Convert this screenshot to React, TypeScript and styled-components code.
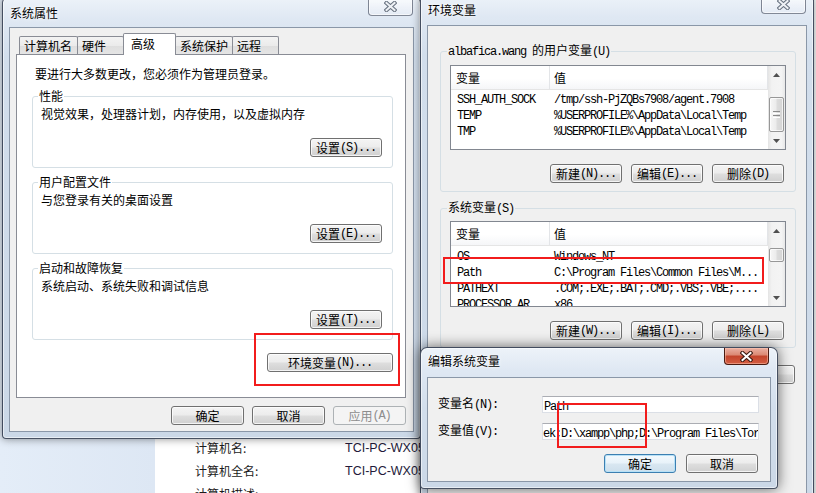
import React from "react";
import styled, { createGlobalStyle, css } from "styled-components";

const CJK = `"Noto Sans CJK SC", "Noto Sans", sans-serif`;
const MONO = `"Liberation Mono", "Noto Sans CJK SC", monospace`;

const GlobalStyle = createGlobalStyle`
  html, body { margin: 0; padding: 0; background: #fff; }
  body { font-family: ${CJK}; font-size: 12px; line-height: 16px; color: #000; }
  * { box-sizing: border-box; }
`;

const Lat = styled.span`
  font-family: ${MONO};
  font-size: 12px;
  letter-spacing: -1.2px;
`;

/* ---------- desktop / explorer behind ---------- */
const Desktop = styled.div`
  position: relative;
  width: 816px;
  height: 493px;
  overflow: hidden;
`;
const Explorer = styled.div`
  display: grid;
  grid-template-columns: 155px 1fr;
  height: 100%;
`;
const NavPane = styled.div`
  background: linear-gradient(90deg, #e4edf8, #dde7f4);
`;
const InfoPane = styled.div`
  background: #fff;
  padding: 436px 0 0 40px;
  display: grid;
  grid-template-columns: 150px auto;
  grid-auto-rows: 23px;
  align-items: center;
  color: #1b1b1b;
  white-space: nowrap;
`;
const InfoValue = styled.span`
  font-family: "Liberation Sans", "Noto Sans", sans-serif;
  font-size: 12.5px;
  color: #231a3a;
`;

/* ---------- window chrome ---------- */
const Win = styled.section<{ $x: number; $y: number; $w: number; $h: number; $active?: boolean }>`
  position: absolute;
  left: ${(p) => p.$x}px;
  top: ${(p) => p.$y}px;
  width: ${(p) => p.$w}px;
  height: ${(p) => p.$h}px;
  display: flex;
  flex-direction: column;
  padding: 0 6px 6px;
  border: 1px solid rgba(30, 40, 60, 0.8);
  border-radius: 7px 7px 4px 4px;
  background: linear-gradient(180deg, #edf3f9 0px, #dfe8f3 22px, #d2deec 60px, #cbd8e7 100%);
  box-shadow: inset 0 0 0 1px rgba(255, 255, 255, 0.55),
    0 0 ${(p) => (p.$active ? 14 : 9)}px rgba(0, 0, 0, ${(p) => (p.$active ? 0.6 : 0.45)});
`;
const TitleBar = styled.header<{ $h: number }>`
  flex: none;
  height: ${(p) => p.$h}px;
  display: flex;
  align-items: flex-start;
`;
const Title = styled.h1<{ $ty: number }>`
  flex: 1;
  margin: 0;
  padding: ${(p) => p.$ty}px 0 0 1px;
  font: normal 12px/16px ${CJK};
  color: #000;
  text-shadow: 0 0 5px #fff, 0 0 2px #fff;
`;
const CloseBtn = styled.div<{ $h: number; $active?: boolean }>`
  width: 45px;
  height: ${(p) => p.$h}px;
  margin-right: 1px;
  display: flex;
  align-items: center;
  justify-content: center;
  border: 1px solid rgba(50, 60, 80, 0.6);
  border-top: none;
  border-radius: 0 0 4px 4px;
  background: linear-gradient(180deg, rgba(255, 255, 255, 0.8), rgba(228, 235, 244, 0.85));
  box-shadow: inset 0 0 0 1px rgba(255, 255, 255, 0.6);
  ${(p) =>
    p.$active &&
    css`
      margin-right: 2px;
      border-color: #4a1a10;
      background: linear-gradient(180deg, #eab0a2 0%, #dc8a75 42%, #c3452c 52%, #d45d42 100%);
      box-shadow: inset 0 0 0 1px rgba(255, 200, 180, 0.5);
    `}
`;
const CloseGlyph = ({ active }: { active?: boolean }) => (
  <svg width="13" height="11" viewBox="0 0 13 11">
    <path
      d="M2.5 2 L10.5 9 M10.5 2 L2.5 9"
      stroke={active ? "#3b1a12" : "#6a7482"}
      strokeWidth="4.2"
      strokeLinecap="square"
    />
    <path
      d="M2.5 2 L10.5 9 M10.5 2 L2.5 9"
      stroke={active ? "#ffffff" : "#eef1f5"}
      strokeWidth="2"
      strokeLinecap="square"
    />
  </svg>
);
const Client = styled.div<{ $pad: string }>`
  flex: 1;
  min-height: 0;
  display: flex;
  flex-direction: column;
  padding: ${(p) => p.$pad};
  background: #f0f0f0;
  border: 1px solid #8a97a8;
`;

/* ---------- controls ---------- */
const Btn = styled.button<{ $w?: number; $default?: boolean }>`
  width: ${(p) => p.$w ?? 72}px;
  height: 19px;
  padding: 0;
  margin: 0;
  border: 1px solid #707070;
  border-radius: 3px;
  background: linear-gradient(180deg, #f4f4f4 0%, #ececec 48%, #dedede 52%, #d0d0d0 100%);
  box-shadow: inset 0 0 0 1px rgba(255, 255, 255, 0.75);
  font-family: ${CJK};
  font-size: 12px;
  line-height: 16px;
  color: #000;
  display: inline-flex;
  align-items: center;
  justify-content: center;
  white-space: nowrap;
  ${(p) =>
    p.$default &&
    css`
      border-color: #3c7fb1;
      box-shadow: inset 0 0 0 1px #b7e1f7;
      background: linear-gradient(180deg, #f3f9fd 0%, #e8f2f9 48%, #d9e7f1 52%, #cddfec 100%);
    `}
  &:disabled {
    border-color: #adb2b5;
    background: #f4f4f4;
    color: #8d8d8d;
    box-shadow: none;
  }
`;
const BtnRow = styled.div<{ $mt: number; $pr?: number; $gap?: number }>`
  display: flex;
  justify-content: flex-end;
  gap: ${(p) => p.$gap ?? 8}px;
  margin-top: ${(p) => p.$mt}px;
  padding-right: ${(p) => p.$pr ?? 0}px;
`;
const Group = styled.fieldset<{ $mt: number; $pt: number; $pb: number }>`
  margin: ${(p) => p.$mt}px 0 0;
  padding: ${(p) => p.$pt}px 10px ${(p) => p.$pb}px 8px;
  border: 1px solid #d5dfe5;
  border-radius: 3px;
  min-width: 0;
`;
const VarGroup = styled(Group)`
  padding-left: 9px;
  padding-right: 9px;
`;
const Legend = styled.legend`
  margin-left: -3px;
  padding: 0 1px;
  line-height: 16px;
  font-size: 12px;
`;

/* ---------- tabs ---------- */
const TabStrip = styled.div`
  position: relative;
  z-index: 1;
  height: 22px;
  margin-bottom: -1px;
  padding-left: 3px;
  display: flex;
  align-items: flex-end;
  flex: none;
`;
const Tab = styled.div<{ $w: number; $sel?: boolean }>`
  position: relative;
  width: ${(p) => p.$w}px;
  height: 18px;
  margin: 0 0 1px -1px;
  padding: 1px 0 0 ${(p) => (p.$sel ? 7 : 4)}px;
  border: 1px solid #898c95;
  border-bottom: none;
  border-radius: 2px 2px 0 0;
  background: linear-gradient(180deg, #f3f3f3 0%, #ebebeb 50%, #dedede 51%, #e5e5e5 100%);
  line-height: 16px;
  white-space: nowrap;
  &:first-child {
    margin-left: 0;
  }
  ${(p) =>
    p.$sel &&
    css`
      z-index: 2;
      height: 22px;
      margin-bottom: 0;
      padding-top: 2px;
      background: #fff;
    `}
`;
const TabPage = styled.div`
  flex: 1;
  min-height: 0;
  display: flex;
  flex-direction: column;
  padding: 11px 12px 0 15px;
  background: #fff;
  border: 1px solid #898c95;
`;
const Notice = styled.div`
  padding-left: 3px;
`;
const GroupText = styled.div``;

/* ---------- list view ---------- */
const List = styled.div<{ $h: number }>`
  height: ${(p) => p.$h}px;
  display: grid;
  grid-template-columns: 1fr 17px;
  overflow: hidden;
  background: #fff;
  border: 1px solid #828790;
`;
const ListBody = styled.div`
  min-width: 0;
  overflow: hidden;
  display: flex;
  flex-direction: column;
`;
const Header = styled.div`
  flex: none;
  height: 24px;
  display: grid;
  grid-template-columns: 99px 1fr;
  border-bottom: 1px solid #e5e5e5;
  background: linear-gradient(180deg, #ffffff 0%, #ffffff 55%, #f5f6f8 100%);
`;
const HeadCell = styled.div<{ $pl: number }>`
  display: flex;
  align-items: center;
  padding-left: ${(p) => p.$pl}px;
  border-right: 1px solid #e3e5e8;
  font-size: 12px;
`;
const Rows = styled.div<{ $pt: number }>`
  padding-top: ${(p) => p.$pt}px;
`;
const Row = styled.div`
  height: 16px;
  display: grid;
  grid-template-columns: 99px 1fr;
  align-items: center;
`;
const Cell = styled(Lat)<{ $pl: number }>`
  padding-left: ${(p) => p.$pl}px;
  white-space: nowrap;
  overflow: hidden;
`;
const ScrollBar = styled.div`
  display: flex;
  flex-direction: column;
  background: linear-gradient(90deg, #e4e4e4 0%, #f2f2f2 22%, #f4f4f4 78%, #e8e8e8 100%);
`;
const Arrow = styled.div`
  flex: none;
  height: 17px;
  display: flex;
  align-items: center;
  justify-content: center;
`;
const Track = styled.div<{ $off: number }>`
  flex: 1;
  padding: ${(p) => p.$off}px 0 0;
`;
const Thumb = styled.div<{ $h: number }>`
  height: ${(p) => p.$h}px;
  margin: 0 1px;
  display: flex;
  align-items: center;
  justify-content: center;
  border: 1px solid #979797;
  border-radius: 2px;
  background: linear-gradient(90deg, #f6f6f6 0%, #ececec 45%, #dcdcdc 55%, #d4d4d4 100%);
  box-shadow: inset 0 0 0 1px rgba(255, 255, 255, 0.7);
`;

const ArrowGlyph = ({ up }: { up?: boolean }) => (
  <svg width="7" height="4" viewBox="0 0 7 4">
    <polygon points={up ? "3.5,0 7,4 0,4" : "0,0 7,0 3.5,4"} fill="#505050" />
  </svg>
);
const Grip = () => (
  <svg width="7" height="7" viewBox="0 0 7 7">
    {[0, 2, 4, 6].map((y) => (
      <rect key={y} x="0" y={y} width="7" height="1" fill={y % 4 === 0 ? "#8a8a8a" : "#ffffff"} />
    ))}
  </svg>
);

type VarRow = [string, string];

const ListView = ({
  h,
  rows,
  rowsTop,
  thumbOff,
  thumbH,
  grip,
}: {
  h: number;
  rows: VarRow[];
  rowsTop: number;
  thumbOff: number;
  thumbH: number;
  grip?: boolean;
}) => (
  <List $h={h}>
    <ListBody>
      <Header>
        <HeadCell $pl={5}>变量</HeadCell>
        <HeadCell $pl={4}>值</HeadCell>
      </Header>
      <Rows $pt={rowsTop}>
        {rows.map(([k, v]) => (
          <Row key={k}>
            <Cell $pl={6}>{k}</Cell>
            <Cell $pl={4}>{v}</Cell>
          </Row>
        ))}
      </Rows>
    </ListBody>
    <ScrollBar>
      <Arrow>
        <ArrowGlyph up />
      </Arrow>
      <Track $off={thumbOff}>
        <Thumb $h={thumbH}>{grip && <Grip />}</Thumb>
      </Track>
      <Arrow>
        <ArrowGlyph />
      </Arrow>
    </ScrollBar>
  </List>
);

/* ---------- edit dialog ---------- */
const Form = styled.div`
  display: grid;
  grid-template-columns: 104px 1fr;
  row-gap: 9px;
  align-items: center;
`;
const Field = styled.div`
  height: 17px;
  padding-left: 1px;
  overflow: hidden;
  white-space: nowrap;
  background: #fff;
  border: 1px solid #dbdfe6;
  border-top-color: #abadb3;
  line-height: 15px;
`;
const ShiftedText = styled(Lat)`
  display: inline-block;
  margin-left: -1px;
`;

/* ---------- annotation ---------- */
const Highlight = styled.div<{ $x: number; $y: number; $w: number; $h: number }>`
  position: absolute;
  left: ${(p) => p.$x}px;
  top: ${(p) => p.$y}px;
  width: ${(p) => p.$w}px;
  height: ${(p) => p.$h}px;
  border: 2px solid #f21c1c;
  pointer-events: none;
`;

const userVars: VarRow[] = [
  ["SSH_AUTH_SOCK", "/tmp/ssh-PjZQBs7908/agent.7908"],
  ["TEMP", "%USERPROFILE%\\AppData\\Local\\Temp"],
  ["TMP", "%USERPROFILE%\\AppData\\Local\\Temp"],
];
const sysVars: VarRow[] = [
  ["OS", "Windows_NT"],
  ["Path", "C:\\Program Files\\Common Files\\M..."],
  ["PATHEXT", ".COM;.EXE;.BAT;.CMD;.VBS;.VBE;...."],
  ["PROCESSOR_AR", "x86"],
];

const tabs: { label: string; w: number; sel?: boolean }[] = [
  { label: "计算机名", w: 59 },
  { label: "硬件", w: 47 },
  { label: "高级", w: 53, sel: true },
  { label: "系统保护", w: 58 },
  { label: "远程", w: 47 },
];

const settingGroups = [
  { title: "性能", text: "视觉效果，处理器计划，内存使用，以及虚拟内存", key: "S" },
  { title: "用户配置文件", text: "与您登录有关的桌面设置", key: "E" },
  { title: "启动和故障恢复", text: "系统启动、系统失败和调试信息", key: "T" },
];

export default function App() {
  return (
    <>
      <GlobalStyle />
      <Desktop>
        <Explorer>
          <NavPane />
          <InfoPane>
            <span>计算机名:</span>
            <InfoValue>TCI-PC-WX05</InfoValue>
            <span>计算机全名:</span>
            <InfoValue>TCI-PC-WX05</InfoValue>
            <span>计算机描述:</span>
            <InfoValue />
          </InfoPane>
        </Explorer>

        {/* 系统属性 */}
        <Win $x={2} $y={-4} $w={419} $h={443}>
          <TitleBar $h={30}>
            <Title $ty={8}>系统属性</Title>
            <CloseBtn $h={19}>
              <CloseGlyph />
            </CloseBtn>
          </TitleBar>
          <Client $pad="5px 7px 6px 6px">
            <TabStrip>
              {tabs.map((t) => (
                <Tab key={t.label} $w={t.w} $sel={t.sel}>
                  {t.label}
                </Tab>
              ))}
            </TabStrip>
            <TabPage>
              <Notice>要进行大多数更改，您必须作为管理员登录。</Notice>
              {settingGroups.map((g) => (
                <Group key={g.title} $mt={6} $pt={2} $pb={10}>
                  <Legend>{g.title}</Legend>
                  <GroupText>{g.text}</GroupText>
                  <BtnRow $mt={16}>
                    <Btn>
                      设置<Lat>({g.key})...</Lat>
                    </Btn>
                  </BtnRow>
                </Group>
              ))}
              <BtnRow $mt={13}>
                <Btn $w={126}>
                  环境变量<Lat>(N)...</Lat>
                </Btn>
              </BtnRow>
            </TabPage>
            <BtnRow $mt={8}>
              <Btn $w={73}>确定</Btn>
              <Btn $w={73}>取消</Btn>
              <Btn $w={73} disabled>
                应用<Lat>(A)</Lat>
              </Btn>
            </BtnRow>
          </Client>
        </Win>

        {/* 环境变量 */}
        <Win $x={420} $y={-6} $w={394} $h={540}>
          <TitleBar $h={30}>
            <Title $ty={7}>环境变量</Title>
            <CloseBtn $h={19}>
              <CloseGlyph />
            </CloseBtn>
          </TitleBar>
          <Client $pad="16px 10px 0 12px">
            <VarGroup $mt={0} $pt={5} $pb={8}>
              <Legend>
                <Lat>albafica.wang </Lat>的用户变量<Lat>(U)</Lat>
              </Legend>
              <ListView h={85} rows={userVars} rowsTop={2} thumbOff={14} thumbH={35} grip />
              <BtnRow $mt={14} $pr={2} $gap={9}>
                <Btn>
                  新建<Lat>(N)...</Lat>
                </Btn>
                <Btn>
                  编辑<Lat>(E)...</Lat>
                </Btn>
                <Btn>
                  删除<Lat>(D)</Lat>
                </Btn>
              </BtnRow>
            </VarGroup>
            <VarGroup $mt={7} $pt={4} $pb={7}>
              <Legend>
                系统变量<Lat>(S)</Lat>
              </Legend>
              <ListView h={86} rows={sysVars} rowsTop={3} thumbOff={9} thumbH={14} />
              <BtnRow $mt={14} $pr={2} $gap={9}>
                <Btn>
                  新建<Lat>(W)...</Lat>
                </Btn>
                <Btn>
                  编辑<Lat>(I)...</Lat>
                </Btn>
                <Btn>
                  删除<Lat>(L)</Lat>
                </Btn>
              </BtnRow>
            </VarGroup>
            <BtnRow $mt={17} $pr={1} $gap={9}>
              <Btn>确定</Btn>
              <Btn>取消</Btn>
            </BtnRow>
          </Client>
        </Win>

        {/* 编辑系统变量 */}
        <Win $x={420} $y={347} $w={358} $h={142} $active>
          <TitleBar $h={29}>
            <Title $ty={5}>编辑系统变量</Title>
            <CloseBtn $h={17} $active>
              <CloseGlyph active />
            </CloseBtn>
          </TitleBar>
          <Client $pad="17px 11px 10px 10px">
            <Form>
              <span>
                变量名<Lat>(N):</Lat>
              </span>
              <Field>
                <Lat>Path</Lat>
              </Field>
              <span>
                变量值<Lat>(V):</Lat>
              </span>
              <Field>
                <ShiftedText>ek;D:\xampp\php;D:\Program Files\TortoiseSVN\bin</ShiftedText>
              </Field>
            </Form>
            <BtnRow $mt={14} $pr={1} $gap={10}>
              <Btn $default>确定</Btn>
              <Btn>取消</Btn>
            </BtnRow>
          </Client>
        </Win>

        <Highlight $x={254} $y={333} $w={146} $h={53} />
        <Highlight $x={443} $y={257} $w={321} $h={27} />
        <Highlight $x={557} $y={403} $w={90} $h={45} />
      </Desktop>
    </>
  );
}
